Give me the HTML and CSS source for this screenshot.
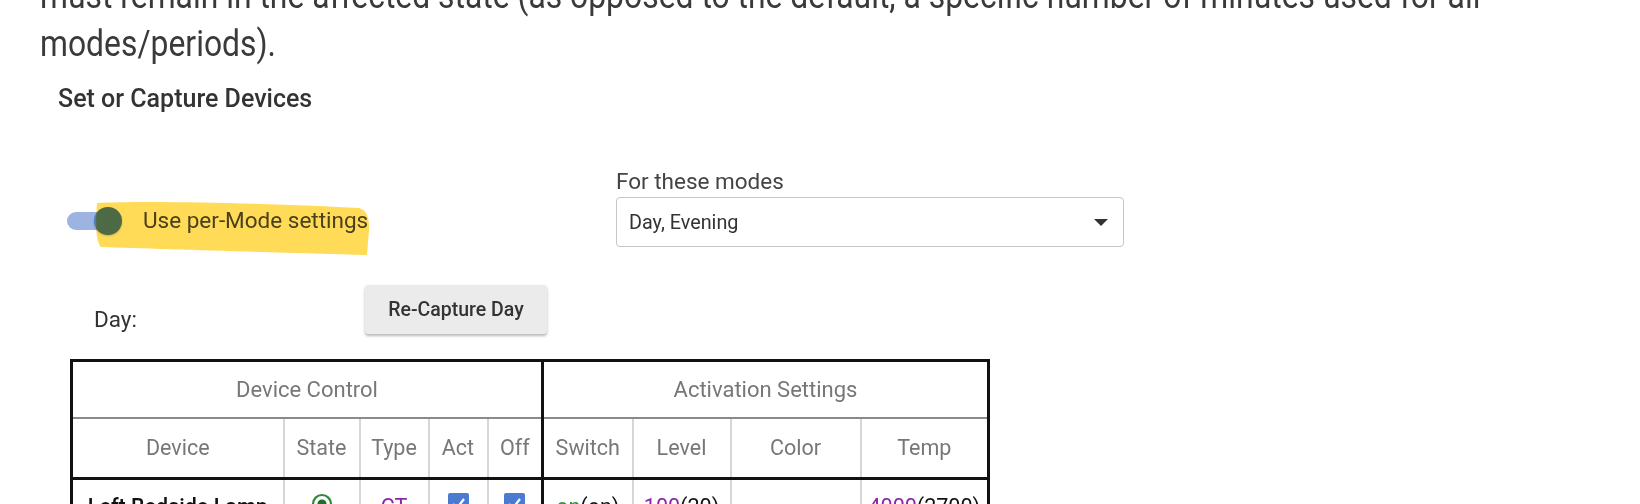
FILE: index.html
```html
<!DOCTYPE html>
<html>
<head>
<meta charset="utf-8">
<link rel="stylesheet" href="styles.css">
</head>
<body>
<div class="page">
  <p class="intro"><span class="intro-line">must remain in the affected state (as opposed to the default, a specific number of minutes used for all</span><br><span class="intro-line">modes/periods).</span></p>
  <h3 class="section-title">Set or Capture Devices</h3>
  <div class="settings-row">
    <div class="toggle-field">
      <span class="toggle"><span class="track"></span><span class="knob"></span></span>
      <span class="toggle-label">Use per-Mode settings</span>
      <svg class="highlight" width="290" height="64" viewBox="0 0 290 64">
        <path d="M6,5 C60,2 200,6 268,10 Q279,13 278,32 L276,57 C200,55 70,51 10,49 Q3,42 6,5 Z" fill="#ffd84a"/>
      </svg>
    </div>
    <div class="modes-field">
      <div class="modes-label">For these modes</div>
      <div class="select">
        <span class="select-value">Day, Evening</span>
        <span class="select-arrow"></span>
      </div>
    </div>
  </div>
  <div class="day-row">
    <span class="day-label">Day:</span>
    <button class="capture-btn">Re-Capture Day</button>
  </div>
  <table class="devices">
    <colgroup>
      <col class="c-device"><col class="c-state"><col class="c-type"><col class="c-act"><col class="c-off">
      <col class="c-switch"><col class="c-level"><col class="c-color"><col class="c-temp">
    </colgroup>
    <thead>
      <tr class="group-row">
        <th colspan="5" class="group-end">Device Control</th>
        <th colspan="4">Activation Settings</th>
      </tr>
      <tr class="col-row">
        <th>Device</th><th>State</th><th>Type</th><th>Act</th><th class="group-end">Off</th>
        <th>Switch</th><th>Level</th><th>Color</th><th>Temp</th>
      </tr>
    </thead>
    <tbody>
      <tr class="data-row">
        <td class="dev-name">Left Bedside Lamp</td>
        <td><svg class="radio" width="22" height="22" viewBox="0 0 22 22"><circle cx="11" cy="11" r="9" fill="none" stroke="#2e8b3a" stroke-width="2.2"/><circle cx="11" cy="11" r="4.6" fill="#1f6e2a"/></svg></td>
        <td><span class="purple">CT</span></td>
        <td><span class="check"><svg width="21" height="21" viewBox="0 0 21 21"><path d="M5,11 L9,15 L16,6" fill="none" stroke="#fff" stroke-width="2.2"/></svg></span></td>
        <td class="group-end"><span class="check"><svg width="21" height="21" viewBox="0 0 21 21"><path d="M5,11 L9,15 L16,6" fill="none" stroke="#fff" stroke-width="2.2"/></svg></span></td>
        <td><span class="green">on</span>(on)</td>
        <td><span class="purple">100</span>(20)</td>
        <td></td>
        <td><span class="purple">4000</span>(2700)</td>
      </tr>
    </tbody>
  </table>
</div>
</body>
</html>
```
FILE: styles.css
```css
html, body {
  margin: 0;
  padding: 0;
  background: #fff;
  overflow: hidden;
}
body {
  font-family: Roboto, "Open Sans", sans-serif;
  color: #333;
}
.page {
  padding-left: 40px;
}
.intro {
  margin: -28px 0 0 0;
  font-size: 36px;
  line-height: 48px;
  color: #3a3a3a;
  white-space: nowrap;
}
.intro-line {
  display: inline-block;
  transform: scaleX(0.885);
  transform-origin: left center;
}
.section-title {
  margin: 17px 0 0 18px;
  font-size: 25px;
  line-height: 28px;
  font-weight: 500;
  color: #333;
}
.settings-row {
  display: grid;
  grid-template-columns: 576px 508px;
  margin-top: 55px;
  align-items: end;
}
.toggle-field {
  position: relative;
  height: 50px;
  display: flex;
  align-items: center;
  padding-left: 27px;
}
.toggle {
  position: relative;
  width: 54px;
  height: 26px;
  display: flex;
  align-items: center;
  margin-top: -2px;
}
.track {
  width: 48px;
  height: 18px;
  border-radius: 9px;
  background: #9db4e3;
}
.knob {
  position: absolute;
  left: 27px;
  top: -1px;
  width: 28px;
  height: 28px;
  border-radius: 50%;
  background: #4e7bc8;
  box-shadow: 0 1px 2px rgba(0,0,0,0.2);
}
.toggle-label {
  margin-left: 22px;
  font-size: 22.5px;
  color: #4a4a4a;
  margin-top: -4px;
}
.highlight {
  position: absolute;
  left: 51px;
  top: 1px;
  mix-blend-mode: multiply;
  opacity: 0.92;
}
.modes-label {
  font-size: 22.5px;
  line-height: 26px;
  color: #444;
  margin-bottom: 3px;
}
.select {
  box-sizing: border-box;
  height: 50px;
  border: 1.5px solid #c6c6c6;
  border-radius: 4px;
  display: flex;
  align-items: center;
  justify-content: space-between;
  padding: 0 15px 0 12px;
}
.select-value {
  font-size: 19.8px;
  color: #333;
}
.select-arrow {
  width: 0;
  height: 0;
  border-left: 7px solid transparent;
  border-right: 7px solid transparent;
  border-top: 7px solid #333;
}
.day-row {
  display: flex;
  align-items: flex-end;
  margin-top: 38px;
}
.day-label {
  margin-left: 54px;
  width: 271px;
  font-size: 22.5px;
  line-height: 24px;
  margin-bottom: 3px;
  color: #333;
}
.capture-btn {
  width: 182px;
  height: 49px;
  border: none;
  border-radius: 3px;
  background: #ebebeb;
  box-shadow: 0 2px 3px rgba(0,0,0,0.28);
  font-family: Roboto, sans-serif;
  font-size: 19.5px;
  font-weight: 500;
  color: #333;
  padding: 0;
}
.devices {
  margin-top: 25px;
  margin-left: 30px;
  border-collapse: collapse;
  table-layout: fixed;
  border: 3px solid #111;
}
.c-device { width: 212px; }
.c-state { width: 76px; }
.c-type { width: 69px; }
.c-act { width: 59px; }
.c-off { width: 55px; }
.c-switch { width: 90px; }
.c-level { width: 98px; }
.c-color { width: 130px; }
.c-temp { width: 128px; }
.devices th, .devices td {
  padding: 0;
  text-align: center;
  font-size: 21.5px;
  line-height: 24px;
  border-left: 2px solid #d6d6d6;
}
.devices th {
  font-weight: 400;
  color: #777;
}
.group-row th {
  height: 55px;
  font-size: 22px;
  border-bottom: 2px solid #8a8a8a;
}
.col-row th {
  height: 58px;
  border-bottom: 3px solid #111;
}
.devices .group-end {
  border-right: 3px solid #111;
}
.data-row td {
  height: 60px;
  vertical-align: top;
  padding-top: 15px;
  color: #111;
}
.dev-name {
  font-weight: 500;
}
.data-row .purple { color: #8e24aa; }
.data-row .green { color: #2e8b3a; }
.radio {
  display: inline-block;
  vertical-align: top;
  margin-top: -2px;
}
.check {
  display: inline-block;
  width: 21px;
  height: 21px;
  background: #4a7bd0;
  border-radius: 2px;
  vertical-align: top;
  margin-top: -2px;
}
.check svg { display: block; }
```
